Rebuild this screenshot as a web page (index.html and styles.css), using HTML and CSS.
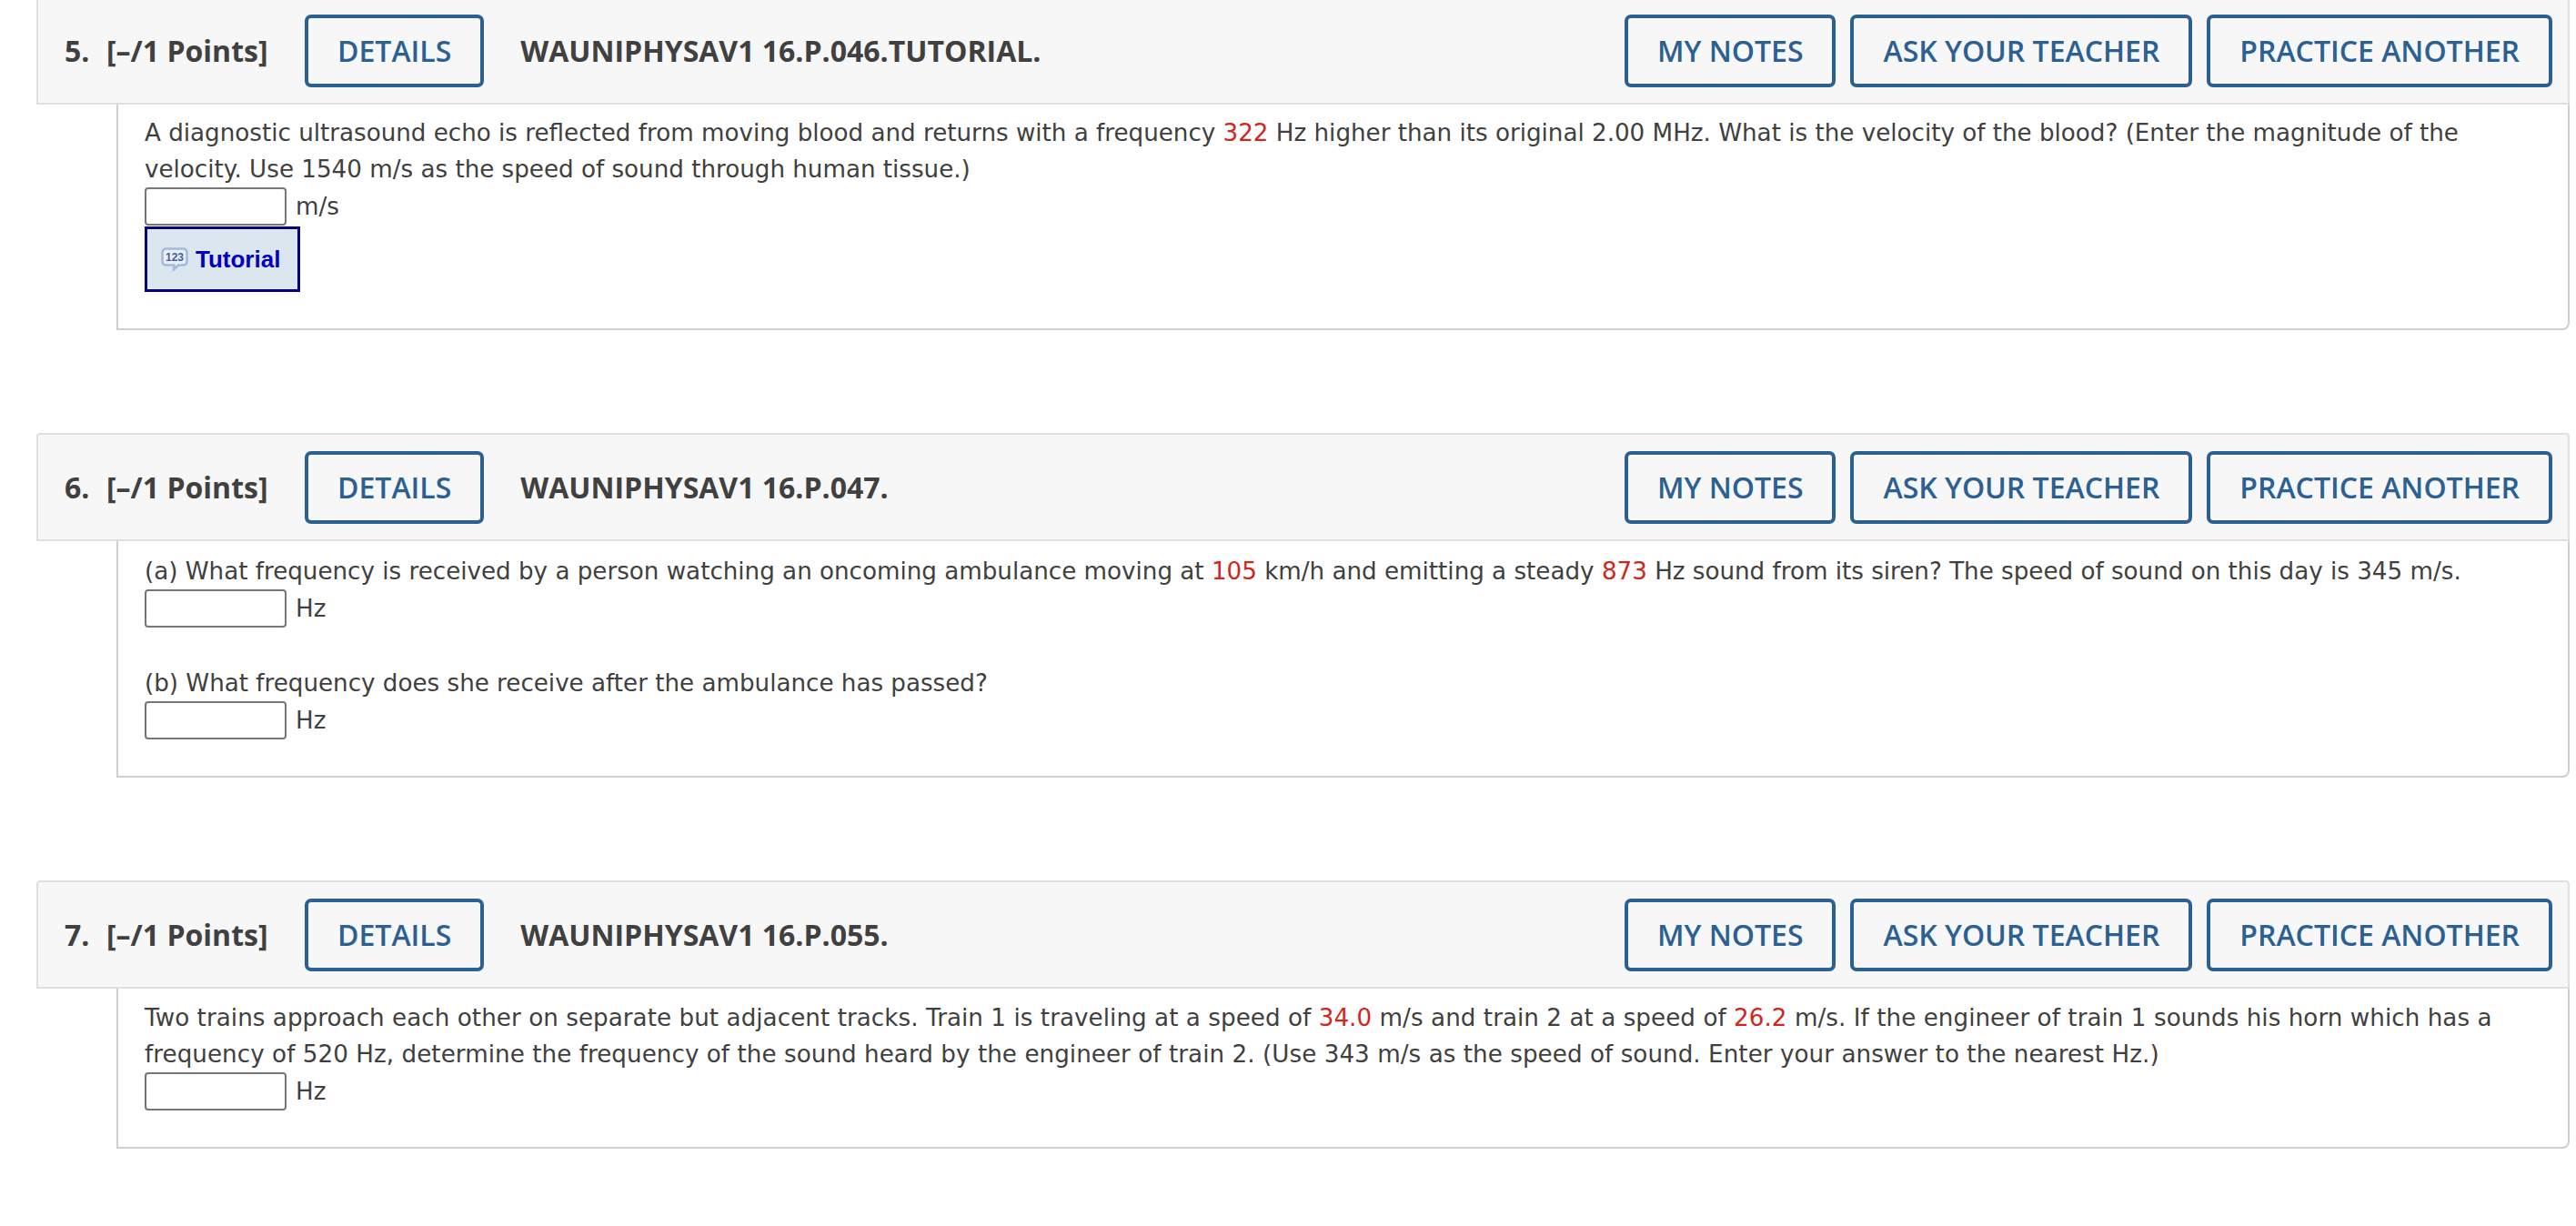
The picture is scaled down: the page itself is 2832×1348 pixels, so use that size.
FILE: index.html
```html
<!DOCTYPE html>
<html lang="en">
<head>
    <meta charset="UTF-8">
    <meta name="viewport" content="width=device-width, initial-scale=1.0">
    <title>Assignment</title>
    <link rel="stylesheet" href="styles.css">
</head>
<body>
    <div class="main">
        <div class="question q5">
            <div class="head">
                <span class="num">5.</span>
                <span class="points">[&ndash;/1 Points]</span>
                <button class="btn details">DETAILS</button>
                <span class="code">WAUNIPHYSAV1 16.P.046.TUTORIAL.</span>
                <div class="actions">
                    <button class="btn">MY NOTES</button>
                    <button class="btn">ASK YOUR TEACHER</button>
                    <button class="btn">PRACTICE ANOTHER</button>
                </div>
            </div>
            <div class="body">
                <p>A diagnostic ultrasound echo is reflected from moving blood and returns with a frequency <span class="red">322</span> Hz higher than its original 2.00 MHz. What is the velocity of the blood? (Enter the magnitude of the velocity. Use 1540 m/s as the speed of sound through human tissue.)</p>
                <div class="answer"><input type="text"><span>m/s</span></div>
                <div class="tutorial">
                    <svg width="30" height="26" viewBox="0 0 30 26">
                        <path d="M6 1.500H24Q28.500 1.500 28.500 6V15Q28.500 19.500 24 19.500H19L14 24.500L14.500 19.500H6Q1.500 19.500 1.500 15V6Q1.500 1.500 6 1.500Z" fill="#e9eff7" stroke="#a5b9da" stroke-width="2.500"/>
                        <text x="15" y="15" class="icon-num">123</text>
                    </svg>
                    <span>Tutorial</span>
                </div>
            </div>
        </div>

        <div class="question q6">
            <div class="head">
                <span class="num">6.</span>
                <span class="points">[&ndash;/1 Points]</span>
                <button class="btn details">DETAILS</button>
                <span class="code">WAUNIPHYSAV1 16.P.047.</span>
                <div class="actions">
                    <button class="btn">MY NOTES</button>
                    <button class="btn">ASK YOUR TEACHER</button>
                    <button class="btn">PRACTICE ANOTHER</button>
                </div>
            </div>
            <div class="body">
                <p>(a) What frequency is received by a person watching an oncoming ambulance moving at <span class="red">105</span> km/h and emitting a steady <span class="red">873</span> Hz sound from its siren? The speed of sound on this day is 345 m/s.</p>
                <div class="answer"><input type="text"><span>Hz</span></div>
                <p class="part">(b) What frequency does she receive after the ambulance has passed?</p>
                <div class="answer"><input type="text"><span>Hz</span></div>
            </div>
        </div>

        <div class="question q7">
            <div class="head">
                <span class="num">7.</span>
                <span class="points">[&ndash;/1 Points]</span>
                <button class="btn details">DETAILS</button>
                <span class="code">WAUNIPHYSAV1 16.P.055.</span>
                <div class="actions">
                    <button class="btn">MY NOTES</button>
                    <button class="btn">ASK YOUR TEACHER</button>
                    <button class="btn">PRACTICE ANOTHER</button>
                </div>
            </div>
            <div class="body">
                <p>Two trains approach each other on separate but adjacent tracks. Train 1 is traveling at a speed of <span class="red">34.0</span> m/s and train 2 at a speed of <span class="red">26.2</span> m/s. If the engineer of train 1 sounds his horn which has a frequency of 520 Hz, determine the frequency of the sound heard by the engineer of train 2. (Use 343 m/s as the speed of sound. Enter your answer to the nearest Hz.)</p>
                <div class="answer"><input type="text"><span>Hz</span></div>
            </div>
        </div>
    </div>
</body>
</html>
```

FILE: styles.css
```css
*{
    box-sizing: border-box;
    padding: 0;
    margin: 0;
}
html, body{
    height: 100%;
    overflow: hidden;
    background: #fff;
}
.main{
    margin-top: -4px;
    padding-left: 40px;
    padding-right: 7px;
    color: #404040;
}
.question{
    margin-bottom: 113px;
}
.head{
    display: flex;
    align-items: center;
    height: 119px;
    padding: 0 17px 0 29px;
    background: #f7f7f7;
    border: 2px solid #e0e0e0;
    border-radius: 4px 4px 0 0;
    font-family: "Open Sans", sans-serif;
    font-weight: 600;
    font-size: 32px;
}
.num{
    width: 46px;
    font-weight: 700;
}
.points{
    width: 218px;
    font-weight: 700;
    white-space: nowrap;
}
.code{
    margin-left: 40px;
    font-weight: 700;
    white-space: nowrap;
}
.actions{
    display: flex;
    gap: 16px;
    margin-left: auto;
}
.btn{
    height: 80px;
    padding: 0 32px;
    background: transparent;
    border: 4px solid #2b6093;
    border-radius: 7px;
    color: #2b6093;
    font-family: "Open Sans", sans-serif;
    font-weight: 600;
    font-size: 32px;
    white-space: nowrap;
}
.body{
    margin-left: 88px;
    padding: 12px 30px 40px 29px;
    background: #fff;
    border: 2px solid #cfcfcf;
    border-top: none;
    border-radius: 0 0 8px 0;
    font-family: "DejaVu Sans", Verdana, sans-serif;
    font-size: 26.170px;
    line-height: 40px;
}
.q5 .body{
    padding-top: 11px;
}
.q6 .body{
    padding-top: 13px;
}
.q7 p{
    letter-spacing: 0.060px;
}
.red{
    color: #d0261c;
}
.part{
    margin-top: 41px;
}
.answer{
    display: flex;
    align-items: center;
    gap: 10px;
    height: 42px;
}
.answer input{
    width: 156px;
    height: 42px;
    background: #fff;
    border: 2px solid #767676;
    border-radius: 4px;
    outline: none;
}
.tutorial{
    display: flex;
    align-items: center;
    gap: 8px;
    width: 171px;
    height: 72px;
    margin-top: 1px;
    padding-left: 15px;
    background: #dce6ef;
    border: 3px solid #000080;
    font-family: "Liberation Sans", Arial, sans-serif;
    font-weight: 700;
    font-size: 26px;
    color: #0000c0;
}
.icon-num{
    font-family: "Liberation Sans", Arial, sans-serif;
    font-weight: 700;
    font-size: 12px;
    fill: #4d5a9c;
    text-anchor: middle;
}
```
